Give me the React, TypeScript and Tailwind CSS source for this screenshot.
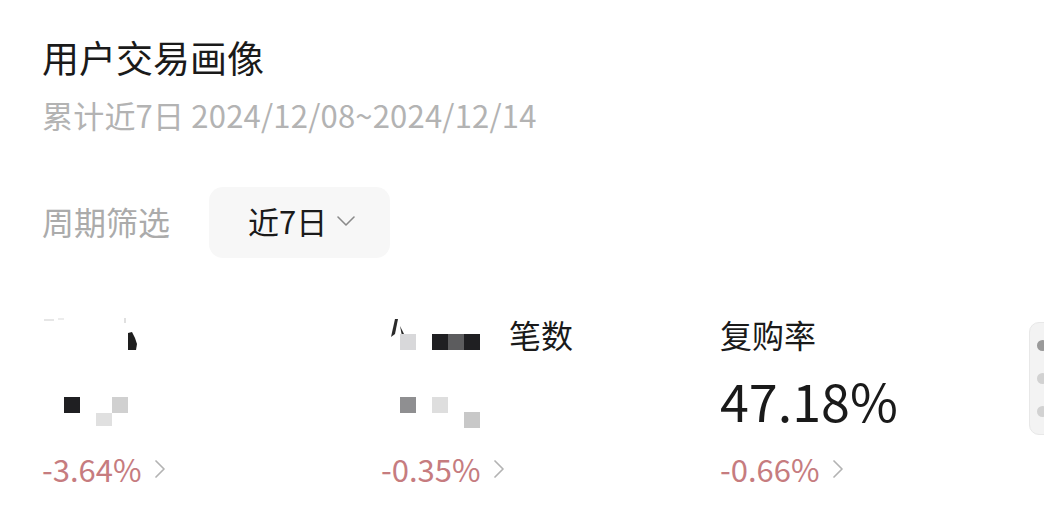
import React from "react";

const FONT = { fontFamily: '"Noto Sans CJK SC", "Noto Sans", sans-serif' };

function Chevron() {
  return (
    <svg width="14" height="22" viewBox="0 0 14 22" className="ml-[11px]">
      <polyline points="3,3 11,11 3,19" fill="none" stroke="#b3b3b3" strokeWidth="1.7" strokeLinecap="round" strokeLinejoin="round" />
    </svg>
  );
}

function Change({ v }: { v: string }) {
  return (
    <div className="flex items-center mt-[23px] h-[36px]">
      <span className="text-[31px] leading-[36px] text-[#c67c7f]">{v}</span>
      <Chevron />
    </div>
  );
}

export default function App() {
  return (
    <div className="relative w-[1044px] h-[507px] bg-white overflow-hidden" style={FONT}>
      <div className="pl-[42px] pt-[36px]">
        <div className="text-[37px] leading-[42px] text-[#1a1a1a]">用户交易画像</div>
        <div className="mt-[19px] text-[31px] leading-[36px] tracking-[0.2px] text-[#b3b3b3]">累计近7日 2024/12/08~2024/12/14</div>

        <div className="mt-[54px] flex items-center h-[71px]">
          <div className="text-[32px] leading-[36px] text-[#ababab] w-[167px] pb-[3px]">周期筛选</div>
          <div className="flex items-center h-[71px] w-[181px] rounded-[14px] bg-[#f7f7f7] pl-[39px]">
            <span className="text-[31px] leading-[36px] text-[#1a1a1a] pb-[4px]">近7日</span>
            <svg width="20" height="12" viewBox="0 0 20 12" className="ml-[9px] mt-[-4px]">
              <polyline points="2,2 10,10 18,2" fill="none" stroke="#8a8a8a" strokeWidth="1.6" strokeLinecap="round" strokeLinejoin="round" />
            </svg>
          </div>
        </div>

        <div className="mt-[58px] grid grid-cols-[339px_339px_1fr]">
          {/* column 1 */}
          <div className="flex flex-col">
            <div className="h-[36px]">
              <svg width="110" height="36" viewBox="0 0 110 36">
                <rect x="2" y="3" width="10" height="2" fill="#e6e6e6" />
                <rect x="16" y="2" width="6" height="2" fill="#ececec" />
                <rect x="82" y="2" width="2" height="5" fill="#e0e0e0" />
                <path d="M86 17 L90 16 L93 22 L95 28 L94 34 L86 34 Z" fill="#1e1e1e" />
              </svg>
            </div>
            <div className="mt-[20px] h-[56px]">
              <svg width="100" height="56" viewBox="0 0 100 56">
                <rect x="22" y="25" width="16" height="16" fill="#1f1f22" />
                <rect x="70" y="25" width="16" height="16" fill="#d0d0d0" />
                <rect x="54" y="41" width="16" height="13" fill="#e0e0e0" />
              </svg>
            </div>
            <Change v="-3.64%" />
          </div>

          {/* column 2 */}
          <div className="flex flex-col">
            <div className="h-[36px] flex items-center">
              <svg width="128" height="36" viewBox="0 0 128 36">
                <path d="M14 3 L17 3 L14 18 L10 21 Z" fill="#2a2a2a" />
                <path d="M19 10 L24 20 L21 20 Z" fill="#2a2a2a" />
                <rect x="19" y="18" width="16" height="16" fill="#d8d8da" />
                <rect x="51" y="18" width="16" height="16" fill="#1f1f22" />
                <rect x="67" y="18" width="16" height="16" fill="#5c5c5e" />
                <rect x="83" y="18" width="16" height="16" fill="#1f1f22" />
              </svg>
              <span className="text-[32px] leading-[36px] text-[#1a1a1a]">笔数</span>
            </div>
            <div className="mt-[20px] h-[56px]">
              <svg width="110" height="56" viewBox="0 0 110 56">
                <rect x="19" y="25" width="16" height="16" fill="#8f8f91" />
                <rect x="51" y="25" width="16" height="16" fill="#dedede" />
                <rect x="83" y="40" width="16" height="16" fill="#c8c8c8" />
              </svg>
            </div>
            <Change v="-0.35%" />
          </div>

          {/* column 3 */}
          <div className="flex flex-col">
            <div className="h-[36px] text-[32px] leading-[36px] text-[#1a1a1a]">复购率</div>
            <div className="mt-[20px] h-[56px] text-[52px] leading-[56px] text-[#1a1a1a]">47.18%</div>
            <Change v="-0.66%" />
          </div>
        </div>
      </div>

      {/* floating side handle */}
      <div className="absolute left-[1029px] top-[322px] w-[30px] h-[113px] rounded-[10px] bg-[#f3f3f3] border border-[#e8e8e8] flex flex-col items-start pl-[7px] pt-[17px] gap-[22px]">
        <div className="w-[11px] h-[11px] rounded-full bg-[#9a9a9a]" />
        <div className="w-[11px] h-[11px] rounded-full bg-[#d2d2d2]" />
        <div className="w-[11px] h-[11px] rounded-full bg-[#d2d2d2]" />
      </div>
    </div>
  );
}
